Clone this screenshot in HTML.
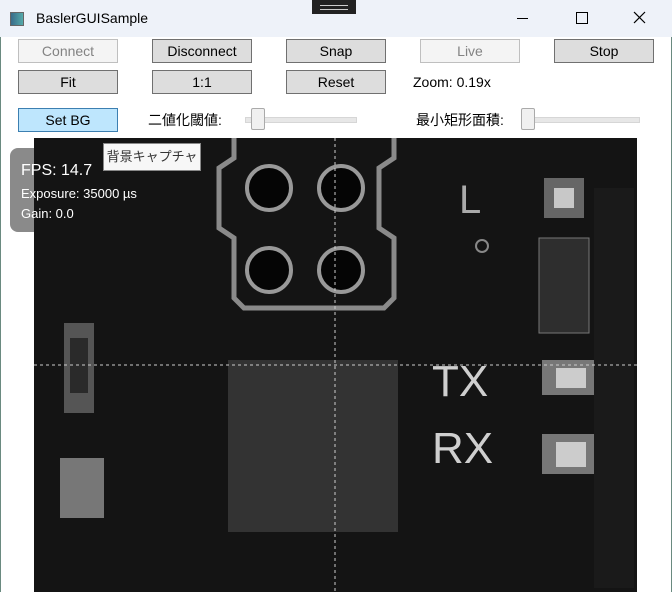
<!DOCTYPE html>
<html><head><style>
body{margin:0;width:672px;height:592px;overflow:hidden;background:#fff;font-family:"Liberation Sans","Noto Sans CJK JP",sans-serif;position:relative}
.title{position:absolute;left:0;top:0;width:672px;height:37px;background:#eef2f9}
.b{position:absolute;width:98px;height:22px;border:1px solid #707070;background:#dddddd;font-size:14px;text-align:center;line-height:22px;color:#000}
.d{border-color:#bfbfbf;background:#f4f4f4;color:#838383}
.t{position:absolute;font-size:14px;color:#000}
.sl{position:absolute;height:4px;background:#e7e7e7;border:1px solid #d6d6d6}
.th{position:absolute;width:12px;height:20px;background:#f0f0f0;border:1px solid #aaa;border-radius:2px}
</style></head><body>
<div class="title"></div>
<div style="position:absolute;left:10px;top:12px;width:12px;height:12px;background:linear-gradient(90deg,#3a6c8a,#5aa);border:1px solid #666"></div>
<div class="t" style="left:36px;top:10px;font-size:14px">BaslerGUISample</div>
<div style="position:absolute;left:312px;top:0;width:44px;height:14px;background:#222"><div style="margin:5px 8px;height:3px;border-top:1px solid #ccc;border-bottom:1px solid #ccc"></div></div>
<div style="position:absolute;left:517px;top:18px;width:11px;height:1px;background:#000"></div>
<div style="position:absolute;left:576px;top:12px;width:10px;height:10px;border:1px solid #000"></div>
<svg style="position:absolute;left:633px;top:11px" width="13" height="13"><path d="M1 1L12 12M12 1L1 12" stroke="#000" stroke-width="1.2"/></svg>
<div class="b d" style="left:18px;top:39px">Connect</div>
<div class="b" style="left:152px;top:39px">Disconnect</div>
<div class="b" style="left:286px;top:39px">Snap</div>
<div class="b d" style="left:420px;top:39px">Live</div>
<div class="b" style="left:554px;top:39px">Stop</div>
<div class="b" style="left:18px;top:70px">Fit</div>
<div class="b" style="left:152px;top:70px">1:1</div>
<div class="b" style="left:286px;top:70px">Reset</div>
<div class="t" style="left:413px;top:74px">Zoom: 0.19x</div>
<div class="b" style="left:18px;top:108px;background:#bee6fd;border-color:#3c7fb1">Set BG</div>
<div class="t" style="left:148px;top:110px">二値化閾値:</div>
<div class="sl" style="left:245px;top:117px;width:110px"></div><div class="th" style="left:251px;top:108px"></div>
<div class="t" style="left:416px;top:110px">最小矩形面積:</div>
<div class="sl" style="left:521px;top:117px;width:117px"></div><div class="th" style="left:521px;top:108px"></div>
<div style="position:absolute;left:10px;top:148px;width:60px;height:84px;background:#8a8a8a;border-radius:8px"></div>
<svg style="position:absolute;left:34px;top:138px" width="603" height="454">
<rect width="603" height="454" fill="#141414"/>
<g fill="none" stroke="#8a8a8a" stroke-width="5">
<path d="M200 0 L200 20 L185 30 L185 90 L200 100 L200 160 L210 170 L350 170 L360 160 L360 100 L345 90 L345 30 L360 20 L360 0"/>
</g>
<g fill="#050505" stroke="#999" stroke-width="4">
<circle cx="235" cy="50" r="22"/><circle cx="307" cy="50" r="22"/>
<circle cx="235" cy="132" r="22"/><circle cx="307" cy="132" r="22"/>
</g>
<rect x="194" y="222" width="170" height="172" fill="#333"/>
<rect x="510" y="40" width="40" height="40" fill="#666"/><rect x="520" y="50" width="20" height="20" fill="#c8c8c8"/>
<rect x="505" y="100" width="50" height="95" fill="#2e2e2e" stroke="#777"/>
<rect x="508" y="222" width="60" height="35" fill="#777"/><rect x="522" y="230" width="30" height="20" fill="#ccc"/>
<rect x="508" y="296" width="60" height="40" fill="#777"/><rect x="522" y="304" width="30" height="25" fill="#ccc"/>
<rect x="30" y="185" width="30" height="90" fill="#555"/><rect x="36" y="200" width="18" height="55" fill="#2a2a2a"/>
<rect x="26" y="320" width="44" height="60" fill="#777"/>
<rect x="560" y="50" width="40" height="400" fill="#1a1a1a"/>
<text x="398" y="258" fill="#cfcfcf" font-size="44" font-family="Liberation Sans">TX</text>
<text x="398" y="325" fill="#cfcfcf" font-size="44" font-family="Liberation Sans">RX</text>
<text x="425" y="75" fill="#aaa" font-size="40" font-family="Liberation Sans">L</text>
<circle cx="448" cy="108" r="6" fill="none" stroke="#888" stroke-width="2"/>
<line x1="301" y1="0" x2="301" y2="454" stroke="#ccc" stroke-dasharray="3,3"/>
<line x1="0" y1="227" x2="603" y2="227" stroke="#ccc" stroke-dasharray="3,3"/>
</svg>
<div class="t" style="left:21px;top:162px;color:#fff;font-size:16px">FPS: 14.7</div>
<div class="t" style="left:21px;top:186px;color:#fff;font-size:13px">Exposure: 35000 µs</div>
<div class="t" style="left:21px;top:206px;color:#fff;font-size:13px">Gain: 0.0</div>
<div class="t" style="left:103px;top:143px;width:96px;height:26px;border:1px solid #888;background:#f7f7f7;font-size:13px;line-height:26px;text-align:center;color:#333">背景キャプチャ</div>
<div style="position:absolute;left:0;top:37px;width:1px;height:555px;background:#6a8a80"></div>
<div style="position:absolute;right:0;top:37px;width:1px;height:555px;background:#6a8a80"></div>
</body></html>
